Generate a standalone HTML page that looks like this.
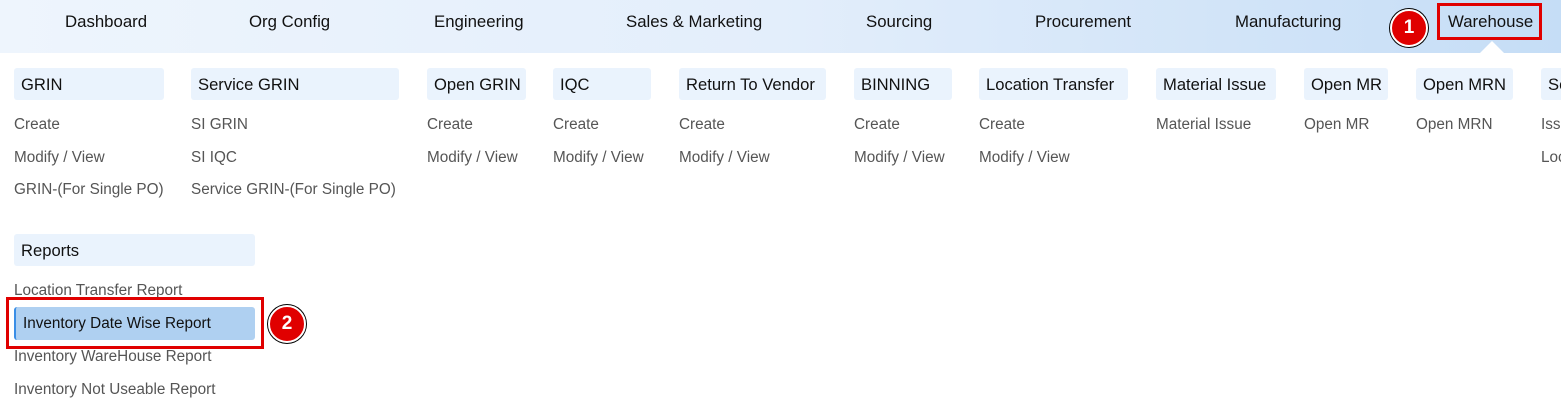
<!DOCTYPE html>
<html><head><meta charset="utf-8"><style>
*{margin:0;padding:0;box-sizing:border-box}
body{width:1561px;height:413px;overflow:hidden;background:#fff;font-family:"Liberation Sans",sans-serif;position:relative}
.nav{position:absolute;left:0;top:0;width:1561px;height:53px;background:linear-gradient(90deg,#eef5fd 0%,#e3eefb 50%,#c5ddf6 100%)}
.nav span{position:absolute;top:12px;font-size:16.8px;color:#111;white-space:nowrap}
.h{position:absolute;height:32px;background:#eaf3fd;border-radius:3px;font-size:16.6px;color:#111;padding-left:7px;line-height:33px;white-space:nowrap;overflow:hidden}
.i{position:absolute;font-size:15.3px;color:#555;white-space:nowrap;line-height:18px}
.badge{position:absolute;width:38px;height:38px;border-radius:50%;background:#e00000;border:2px solid #fff;box-shadow:0 0 0 1px #000;color:#fff;font-weight:bold;font-size:19px;text-align:center;line-height:34px}
.red{position:absolute;border:3px solid #e00000}
</style></head><body>
<div class="nav">
<span style="left:65px">Dashboard</span>
<span style="left:249px">Org Config</span>
<span style="left:434px">Engineering</span>
<span style="left:626px">Sales &amp; Marketing</span>
<span style="left:866px">Sourcing</span>
<span style="left:1035px">Procurement</span>
<span style="left:1235px">Manufacturing</span>
<span style="left:1448px">Warehouse</span>
</div>
<div style="position:absolute;left:1480px;top:41px;width:0;height:0;border-left:12px solid transparent;border-right:12px solid transparent;border-bottom:12px solid #fff"></div>
<div class="red" style="left:1437px;top:3px;width:105px;height:37px"></div>
<div class="badge" style="left:1390px;top:9px">1</div>

<div class="h" style="left:14px;top:68px;width:150px">GRIN</div>
<div class="h" style="left:191px;top:68px;width:208px">Service GRIN</div>
<div class="h" style="left:427px;top:68px;width:99px">Open GRIN</div>
<div class="h" style="left:553px;top:68px;width:98px">IQC</div>
<div class="h" style="left:679px;top:68px;width:147px">Return To Vendor</div>
<div class="h" style="left:854px;top:68px;width:98px">BINNING</div>
<div class="h" style="left:979px;top:68px;width:149px">Location Transfer</div>
<div class="h" style="left:1156px;top:68px;width:120px">Material Issue</div>
<div class="h" style="left:1304px;top:68px;width:84px">Open MR</div>
<div class="h" style="left:1416px;top:68px;width:97px">Open MRN</div>
<div class="h" style="left:1541px;top:68px;width:30px">Se</div>

<div class="i" style="left:14px;top:116px">Create</div>
<div class="i" style="left:14px;top:149px">Modify / View</div>
<div class="i" style="left:14px;top:181px">GRIN-(For Single PO)</div>
<div class="i" style="left:191px;top:116px">SI GRIN</div>
<div class="i" style="left:191px;top:149px">SI IQC</div>
<div class="i" style="left:191px;top:181px">Service GRIN-(For Single PO)</div>
<div class="i" style="left:427px;top:116px">Create</div>
<div class="i" style="left:427px;top:149px">Modify / View</div>
<div class="i" style="left:553px;top:116px">Create</div>
<div class="i" style="left:553px;top:149px">Modify / View</div>
<div class="i" style="left:679px;top:116px">Create</div>
<div class="i" style="left:679px;top:149px">Modify / View</div>
<div class="i" style="left:854px;top:116px">Create</div>
<div class="i" style="left:854px;top:149px">Modify / View</div>
<div class="i" style="left:979px;top:116px">Create</div>
<div class="i" style="left:979px;top:149px">Modify / View</div>
<div class="i" style="left:1156px;top:116px">Material Issue</div>
<div class="i" style="left:1304px;top:116px">Open MR</div>
<div class="i" style="left:1416px;top:116px">Open MRN</div>
<div class="i" style="left:1541px;top:116px">Iss</div>
<div class="i" style="left:1541px;top:149px">Loc</div>

<div class="h" style="left:14px;top:234px;width:241px">Reports</div>
<div class="i" style="left:14px;top:282px">Location Transfer Report</div>
<div style="position:absolute;left:14px;top:307px;width:241px;height:33px;background:#afd0f1;border-left:2px solid #3a8ee6;border-radius:3px;font-size:15.3px;color:#111;padding-left:7px;line-height:33px;white-space:nowrap">Inventory Date Wise Report</div>
<div class="red" style="left:6px;top:297px;width:258px;height:52px"></div>
<div class="badge" style="left:268px;top:305px">2</div>
<div class="i" style="left:14px;top:348px">Inventory WareHouse Report</div>
<div class="i" style="left:14px;top:381px">Inventory Not Useable Report</div>
</body></html>
